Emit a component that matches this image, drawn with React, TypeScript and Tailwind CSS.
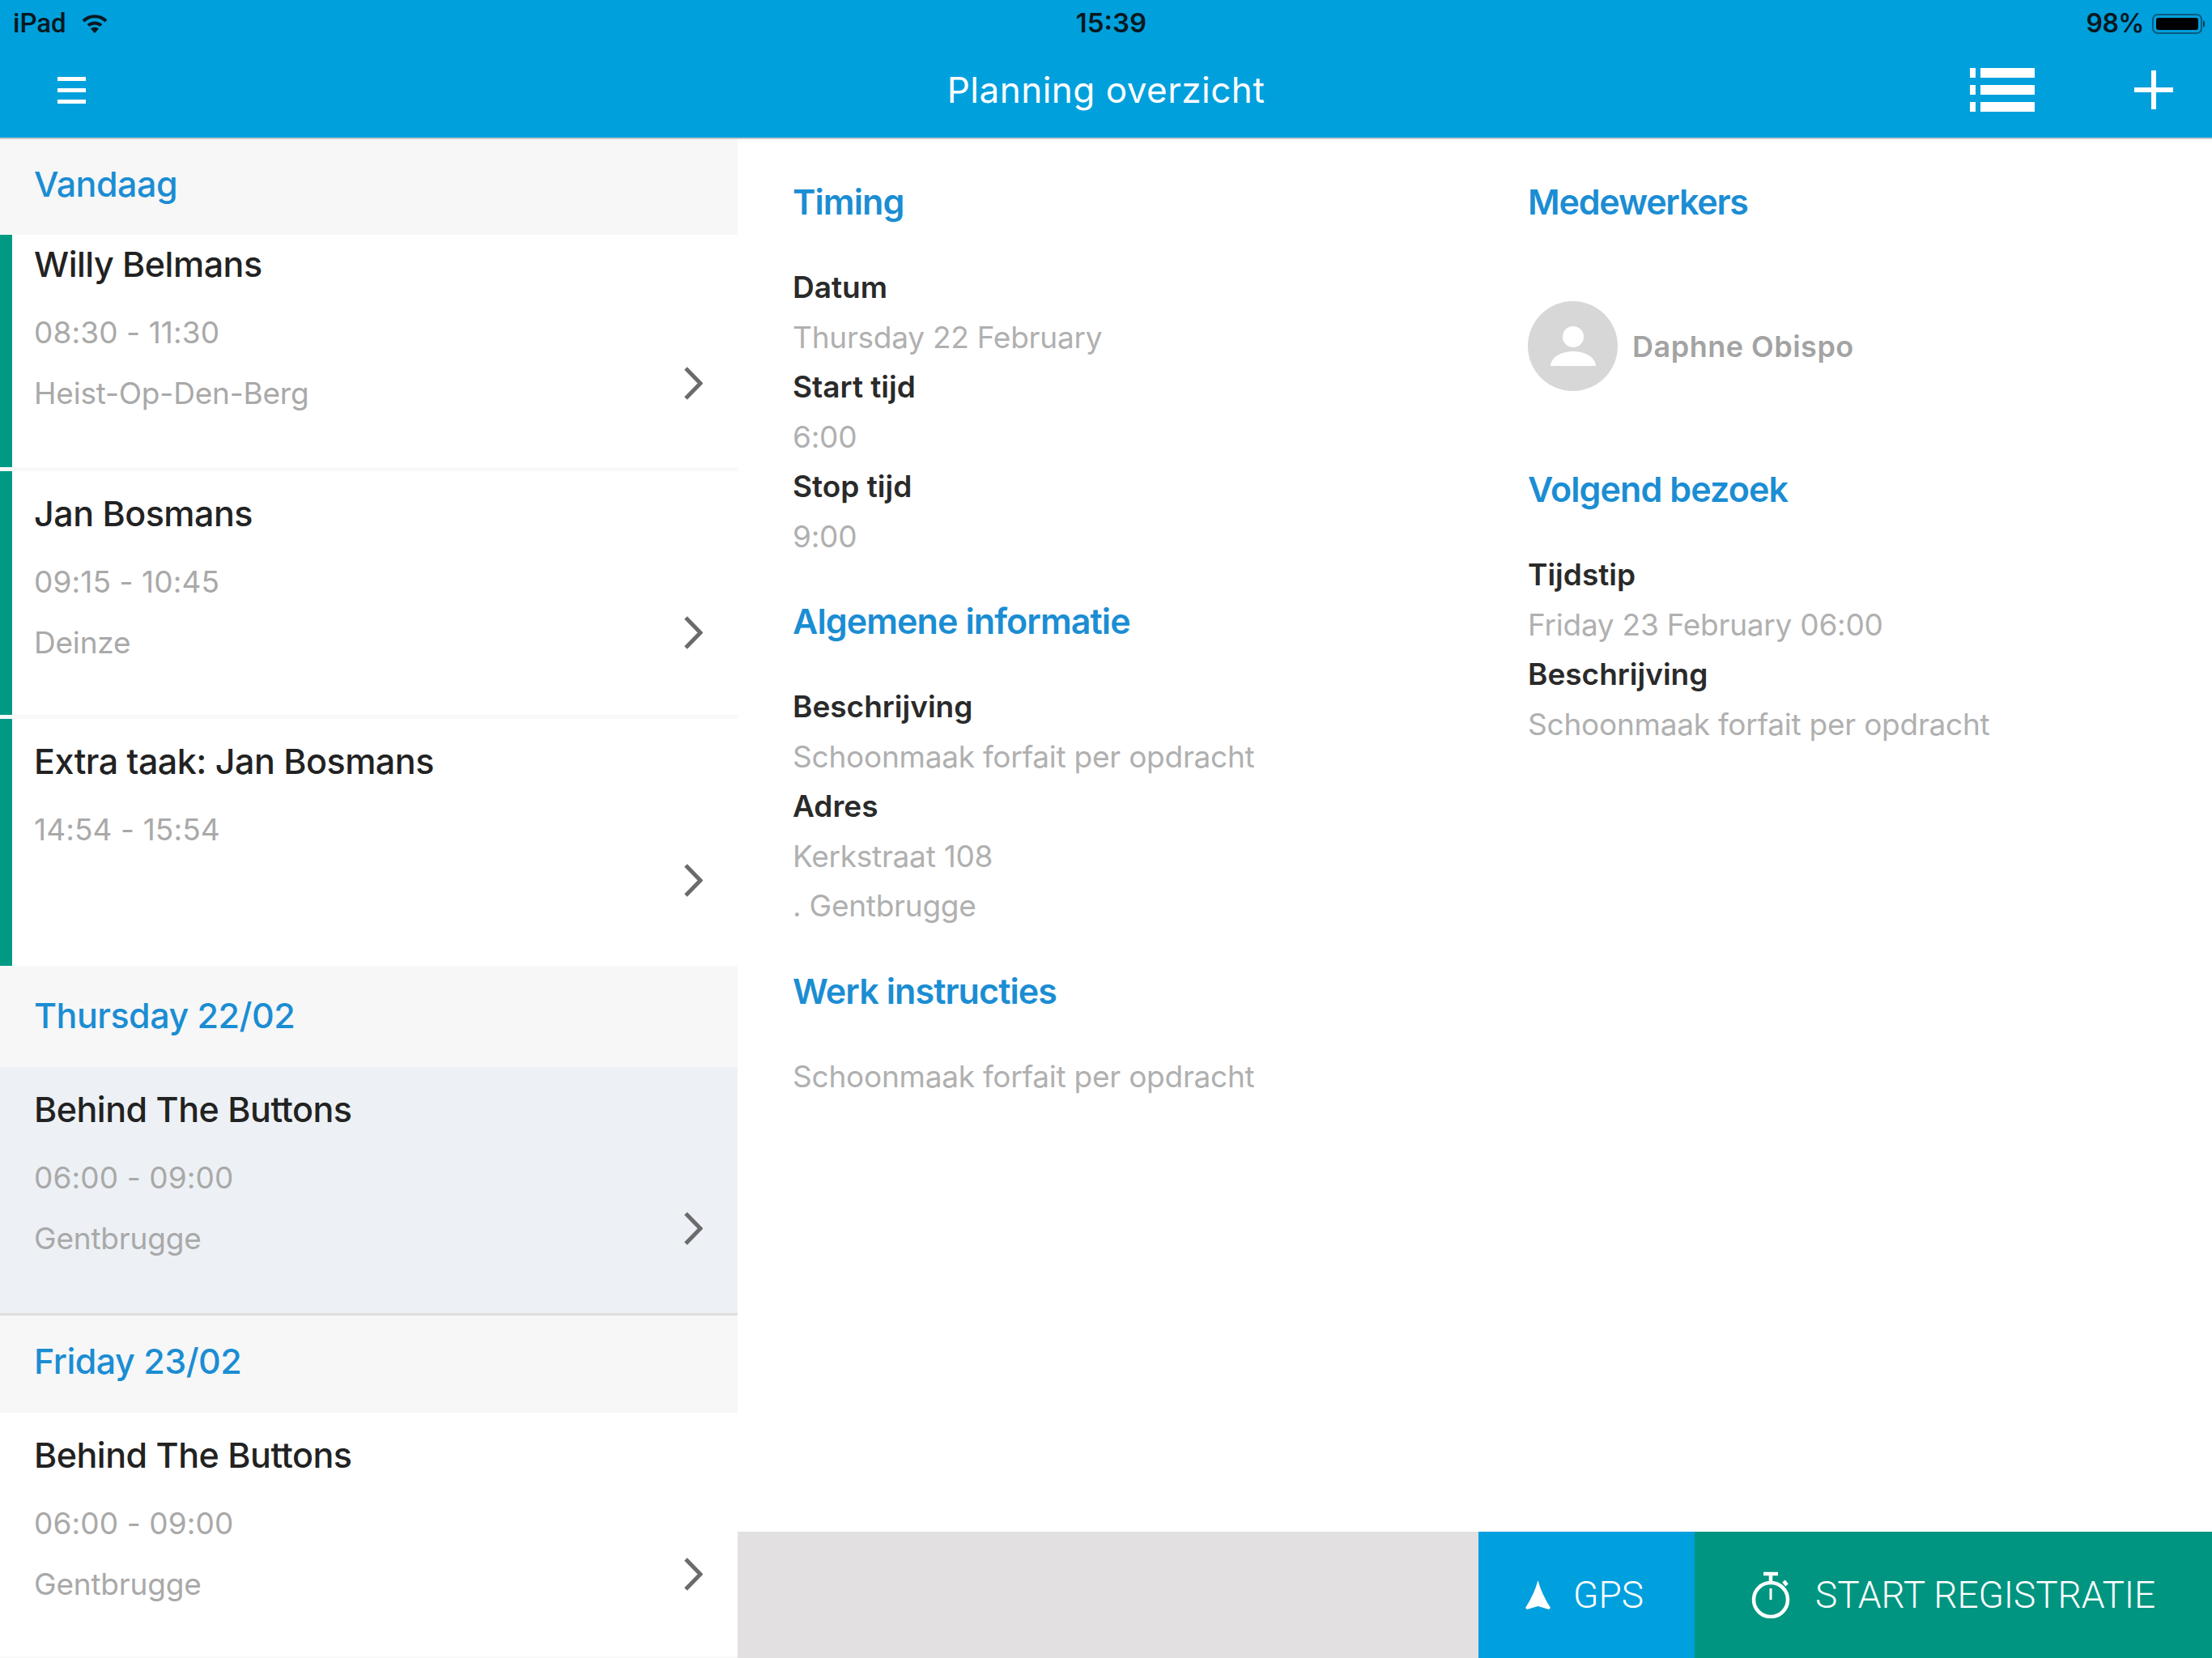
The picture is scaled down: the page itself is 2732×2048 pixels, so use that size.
import { ReactNode } from 'react';

type Task = { title: string; time: string; place?: string; bar?: boolean; first?: boolean; last?: boolean; selected?: boolean };

function Chevron() {
  return (
    <svg width="24" height="41" viewBox="0 0 24 41" fill="none" className="mt-[157px] shrink-0">
      <path d="M3 2 L21 20.5 L3 39" stroke="#6b6b6b" strokeWidth="5" />
    </svg>
  );
}

function DayHeader({ children, first }: { children: ReactNode; first?: boolean }) {
  return (
    <div
      className={`${first ? 'h-[118px]' : 'h-[120px]'} shrink-0 bg-[#f7f7f7] pl-[42px] pb-[8px] flex items-center text-[43px] font-medium tracking-[-0.5px] text-[#1b8dd3]`}
    >
      {children}
    </div>
  );
}

function TaskRow({ title, time, place, bar, first, last, selected }: Task) {
  return (
    <div
      className={`flex shrink-0 ${first ? 'h-[292px]' : last ? 'h-[310px]' : selected ? 'h-[307px]' : 'h-[306px]'} ${
        selected ? 'bg-[#edf1f5] border-b-[3px] border-[#e0dede]' : 'bg-white border-b-[5px] border-[#f8f8f8]'
      }`}
    >
      <div className={`w-[15px] shrink-0 ${bar ? 'bg-[#009a84]' : ''}`} />
      <div className={`flex-1 flex justify-between pl-[27px] pr-[43px] ${first ? 'pt-[6px]' : 'pt-[21.5px]'}`}>
        <div>
          <div className="h-[60px] leading-[60px] text-[43px] font-medium tracking-[-0.5px] text-[#222222]">{title}</div>
          <div className="h-[60px] leading-[60px] mt-[25px] text-[37px] tracking-[0.1px] text-[#a9a9a9]">{time}</div>
          {place && <div className="h-[60px] leading-[60px] mt-[15px] text-[37px] tracking-[-0.2px] text-[#a9a9a9]">{place}</div>}
        </div>
        <Chevron />
      </div>
    </div>
  );
}

function SectionTitle({ children }: { children: ReactNode }) {
  return <div className="h-[61px] leading-[61px] mb-[44px] text-[43px] font-semibold tracking-[-0.9px] text-[#1b8dd3]">{children}</div>;
}

function Label({ children }: { children: ReactNode }) {
  return <div className="h-[61.5px] leading-[61.5px] text-[37px] font-semibold tracking-[0px] text-[#2a2a2a]">{children}</div>;
}

function Value({ children }: { children: ReactNode }) {
  return <div className="h-[61.5px] leading-[61.5px] text-[37px] tracking-[-0.25px] text-[#b0b0b0]">{children}</div>;
}

export default function App() {
  return (
    <div className="w-[2732px] h-[2048px] overflow-hidden flex flex-col bg-white font-[Inter,sans-serif]">
      <header className="h-[172px] shrink-0 bg-[#00a0dd] border-b-[2px] border-[#c9cbcc]">
        <div className="h-[56px] grid grid-cols-3 items-center pl-[16px] pr-[7px] pt-[2px] text-[#0a1820]">
          <div className="flex items-center gap-[19px]">
            <span className="text-[33px] font-medium font-[Roboto,sans-serif]">iPad</span>
            <svg width="32" height="25" viewBox="0 0 32 25" fill="none" stroke="#0a1820" strokeWidth="4">
              <path d="M2 9 A 20 20 0 0 1 30 9" />
              <path d="M8 14.5 A 12 12 0 0 1 24 14.5" />
              <path d="M16 24 L11 18.5 A 7 7 0 0 1 21 18.5 Z" fill="#0a1820" stroke="none" />
            </svg>
          </div>
          <div className="text-center text-[33px] font-semibold pl-[4px]">15:39</div>
          <div className="flex items-center justify-end gap-[10px]">
            <span className="text-[32px] font-semibold tracking-[-0.5px]">98%</span>
            <svg width="67" height="25" viewBox="0 0 67 25">
              <rect x="1" y="1" width="60" height="23" rx="6" fill="none" stroke="#0a5a80" strokeWidth="2" />
              <rect x="5" y="5" width="52" height="15" rx="3" fill="#000" />
              <path d="M63 8 C66 9 66 16 63 17 Z" fill="#0a3a55" />
            </svg>
          </div>
        </div>
        <div className="h-[114px] grid grid-cols-[1fr_auto_1fr] items-center">
          <div className="pl-[71px] pb-[4px]">
            <svg width="35" height="34" viewBox="0 0 35 34" fill="#fff">
              <rect y="1" width="35" height="5" />
              <rect y="15" width="35" height="5" />
              <rect y="29" width="35" height="5" />
            </svg>
          </div>
          <div className="text-[44px] text-white tracking-[0.5px] pb-[4px]">Planning overzicht</div>
          <div className="flex justify-end items-center gap-[123px] pr-[48px] pb-[4px]">
            <svg width="80" height="54" viewBox="0 0 80 54" fill="#fff">
              <rect x="0" y="0" width="7" height="12" />
              <rect x="13" y="0" width="67" height="12" />
              <rect x="0" y="21" width="7" height="12" />
              <rect x="13" y="21" width="67" height="12" />
              <rect x="0" y="42" width="7" height="12" />
              <rect x="13" y="42" width="67" height="12" />
            </svg>
            <svg width="48" height="48" viewBox="0 0 48 48" fill="#fff">
              <rect x="21" y="0" width="6" height="48" />
              <rect x="0" y="21" width="48" height="6" />
            </svg>
          </div>
        </div>
      </header>

      <div className="flex-1 flex min-h-0">
        <aside className="w-[911px] shrink-0 flex flex-col overflow-hidden">
          <DayHeader first>Vandaag</DayHeader>
          <TaskRow first bar title="Willy Belmans" time="08:30 - 11:30" place="Heist-Op-Den-Berg" />
          <TaskRow bar title="Jan Bosmans" time="09:15 - 10:45" place="Deinze" />
          <TaskRow bar last title="Extra taak: Jan Bosmans" time="14:54 - 15:54" />
          <DayHeader>Thursday 22/02</DayHeader>
          <TaskRow selected title="Behind The Buttons" time="06:00 - 09:00" place="Gentbrugge" />
          <DayHeader>Friday 23/02</DayHeader>
          <TaskRow title="Behind The Buttons" time="06:00 - 09:00" place="Gentbrugge" />
        </aside>

        <main className="flex-1 flex flex-col min-w-0">
          <div className="flex-1 flex pt-[47px] pl-[68px]">
            <div className="w-[908px] shrink-0">
              <SectionTitle>Timing</SectionTitle>
              <Label>Datum</Label>
              <Value>Thursday 22 February</Value>
              <Label>Start tijd</Label>
              <Value>6:00</Value>
              <Label>Stop tijd</Label>
              <Value>9:00</Value>
              <div className="h-[44px]" />
              <SectionTitle>Algemene informatie</SectionTitle>
              <Label>Beschrijving</Label>
              <Value>Schoonmaak forfait per opdracht</Value>
              <Label>Adres</Label>
              <Value>Kerkstraat 108</Value>
              <Value>. Gentbrugge</Value>
              <div className="h-[44px]" />
              <SectionTitle>Werk instructies</SectionTitle>
              <Value>Schoonmaak forfait per opdracht</Value>
            </div>
            <div>
              <div className="h-[61px] leading-[61px] text-[43px] font-semibold tracking-[-1.2px] text-[#1b8dd3]">Medewerkers</div>
              <div className="flex items-center gap-[18px] mt-[92px] mb-[91px]">
                <div className="w-[111px] h-[111px] rounded-full bg-[#d8d7d8] flex items-center justify-center">
                  <svg width="58" height="50" viewBox="0 0 58 50" fill="#fff">
                    <circle cx="29" cy="13" r="13" />
                    <path d="M1 49 C2 36 18 31 29 31 C40 31 56 36 57 49 Z" />
                  </svg>
                </div>
                <span className="text-[36px] font-semibold tracking-[0.5px] text-[#a3a3a3]">Daphne Obispo</span>
              </div>
              <SectionTitle>Volgend bezoek</SectionTitle>
              <Label>Tijdstip</Label>
              <Value>Friday 23 February 06:00</Value>
              <Label>Beschrijving</Label>
              <Value>Schoonmaak forfait per opdracht</Value>
            </div>
          </div>

          <div className="h-[156px] shrink-0 flex font-[Roboto,sans-serif] text-white text-[46px] font-light">
            <div className="w-[915px] bg-[#e2e0e0]" />
            <div className="w-[267px] bg-[#009fde] flex items-center pl-[58px] gap-[28px]">
              <svg width="31" height="36" viewBox="0 0 31 36" fill="#fff">
                <path d="M15.5 0 Q 20 17 31 34 L 29 36 L15.5 32 L2 36 L 0 34 Q 11 17 15.5 0 Z" />
              </svg>
              <span>GPS</span>
            </div>
            <div className="flex-1 bg-[#009580] flex items-center pl-[70px] gap-[31px]">
              <svg width="48" height="58" viewBox="0 0 48 58" fill="none" stroke="#fff" strokeWidth="4.5">
                <circle cx="24" cy="35" r="21" />
                <path d="M15 3 H33 M24 3 V13 M40 12 L44 17" />
                <path d="M24 21 V35" strokeWidth="3" />
              </svg>
              <span className="tracking-[-0.1px]">START REGISTRATIE</span>
            </div>
          </div>
        </main>
      </div>
    </div>
  );
}
